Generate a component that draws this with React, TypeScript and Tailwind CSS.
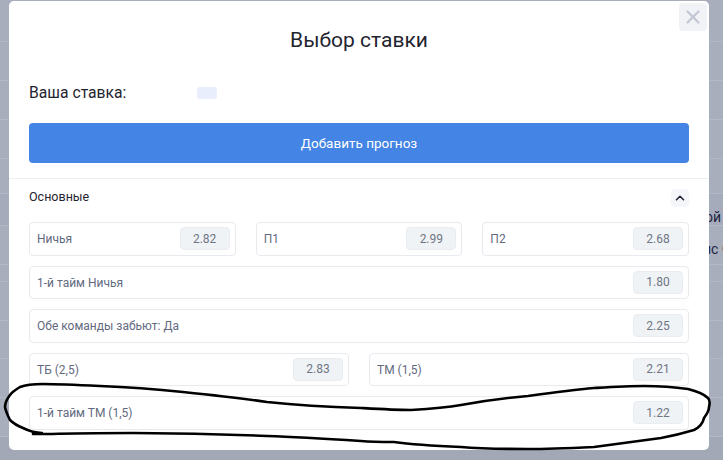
import { ChevronUp, X } from 'lucide-react';

const backdropRows = [
  { h: 'h-[42px]', tone: '' },
  { h: 'h-[39px]', tone: '' },
  { h: 'h-[39px]', tone: '' },
  { h: 'h-[39px]', tone: '' },
  { h: 'h-[35px]', tone: '' },
  { h: 'h-[32px]', tone: 'bg-[#a5abbb]', text: 'ой', cls: 'justify-end pr-[2px] pt-[16px]' },
  { h: 'h-[39px]', tone: '', text: 'ис С', cls: 'pl-[703px] pt-[9px]' },
  { h: 'h-[17px]', tone: '' },
  { h: 'h-[39px]', tone: '' },
  { h: 'h-[38px]', tone: '' },
  { h: 'h-[39px]', tone: '' },
  { h: 'h-[39px]', tone: '' },
];

function Odd({ label, value }: { label: string; value: string }) {
  return (
    <div className="flex h-[33.5px] min-w-0 items-center justify-between rounded-[4px] border border-[#e8eaf0] bg-white pl-[7px] pr-[5px]">
      <span className="pt-[1px] text-[12px] text-[#636a80]">{label}</span>
      <span className="flex h-[23px] w-[50px] items-center justify-center rounded-[4px] border border-[#e9edf2] bg-[#f0f3f6] text-[12px] text-[#6f7684]">
        {value}
      </span>
    </div>
  );
}

export default function App() {
  return (
    <div className="relative h-[460px] w-[723px] overflow-hidden bg-[#a9aebd] font-['Roboto',sans-serif]">
      {/* page behind the overlay */}
      <div className="flex flex-col">
        {backdropRows.map((row, i) => (
          <div
            key={i}
            className={`flex items-center overflow-hidden whitespace-nowrap border-b border-[#b4b9c6] text-[14px] text-[#1c2340] ${row.h} ${row.tone} ${row.cls ?? ''}`}
          >
            {row.text}
          </div>
        ))}
        <div className="h-[23px] bg-[#a3a8b6]" />
      </div>

      <div className="absolute left-[9px] top-[1px] flex h-[449px] w-[700px] flex-col rounded-[5px] bg-white">
        <button className="absolute right-[2px] top-[2px] flex h-[28px] w-[28px] items-center justify-center rounded-[4px] bg-[#f0f2f6] text-[#c3c7d5]">
          <X size={22} strokeWidth={2.4} />
        </button>

        <h2 className="pt-[23px] text-center text-[21px] leading-[32px] text-[#1f2430]">Выбор ставки</h2>

        <div className="flex items-center px-5 pt-[25px]">
          <span className="w-[168px] text-[15.7px] leading-[24px] text-[#1f2430]">Ваша ставка:</span>
          <span className="h-[12px] w-[20px] rounded-[3px] bg-[#e8eefb]" />
        </div>

        <div className="px-5 pt-[18px]">
          <button className="h-[40px] w-full rounded-[4px] bg-[#4484e4] text-[13.5px] text-white">Добавить прогноз</button>
        </div>

        <div className="mt-[15px] border-t border-[#eef0f4] px-5">
          <div className="flex h-[37px] items-center justify-between">
            <span className="text-[12.5px] text-[#1f2430]">Основные</span>
            <span className="flex h-[18px] w-[18px] items-center justify-center rounded-[4px] bg-[#f4f6f9] text-[#1f2430]">
              <ChevronUp size={14} strokeWidth={2.6} />
            </span>
          </div>

          <div className="mt-[6px] flex flex-col gap-[10px]">
            <div className="grid grid-cols-3 gap-5">
              <Odd label="Ничья" value="2.82" />
              <Odd label="П1" value="2.99" />
              <Odd label="П2" value="2.68" />
            </div>
            <Odd label="1-й тайм Ничья" value="1.80" />
            <Odd label="Обе команды забьют: Да" value="2.25" />
            <div className="grid grid-cols-2 gap-5">
              <Odd label="ТБ (2,5)" value="2.83" />
              <Odd label="ТМ (1,5)" value="2.21" />
            </div>
            <Odd label="1-й тайм ТМ (1,5)" value="1.22" />
          </div>
        </div>
      </div>

      {/* marker circled by hand over the screenshot */}
      <svg className="pointer-events-none absolute left-0 top-0" width="723" height="460" viewBox="0 0 723 460" fill="none">
        <path
          d="M361 408 C330 407 296 405 267 402 C240 398 212 395 183 392 C155 389 128 387 100 386 C80 385 60 384 43 384 C32 384 25 385 20 387 C15 390 12 392 10 395 C7 399 5 403 5 407 C6 412 8 416 10 420 C14 424 18 426 23 428 C29 431 36 433 42 433 L33 434 L52 434 C78 433 105 433 133 433 C178 433 222 434 267 436 C298 437 330 439 361 441 C372 442 383 442 394 442 C416 445 438 446 461 447 C483 449 505 449 528 449 C550 449 572 448 594 447 C617 444 639 441 661 438 C672 436 684 433 694 430 C700 427 703 423 704 418 C707 414 709 411 709 407 C710 403 710 400 708 398 C703 393 696 391 688 389 C674 387 659 386 644 386 C627 386 611 387 594 388 C572 390 550 393 528 396 C505 398 483 401 461 405 C444 408 428 409 411 410 C394 410 378 409 361 408 Z"
          stroke="#000"
          strokeWidth="2.6"
          strokeLinejoin="round"
        />
      </svg>
    </div>
  );
}
